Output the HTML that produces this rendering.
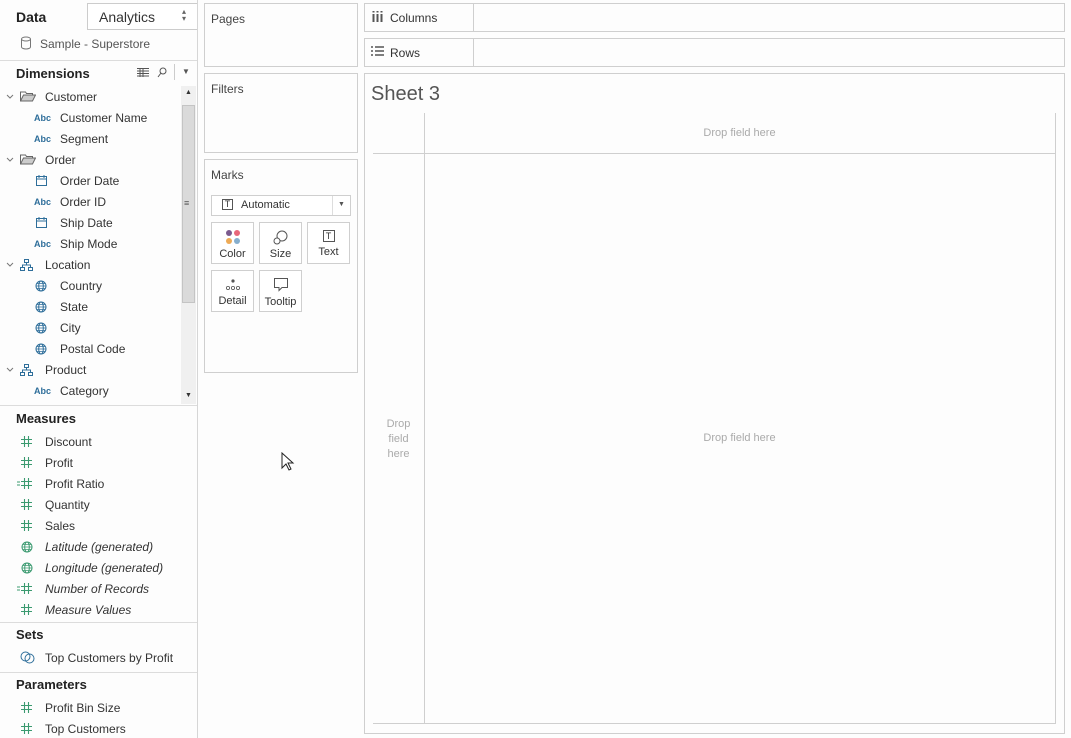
<!DOCTYPE html>
<html><head><meta charset="utf-8"><style>
*{margin:0;padding:0;box-sizing:border-box}
body{width:1071px;height:738px;background:#fdfdfd;font-family:"Liberation Sans",sans-serif;font-size:12px;color:#333;position:relative;overflow:hidden}
.a{position:absolute}
.box{position:absolute;border:1px solid #cfcfcf;background:#fdfdfd}
.t{position:absolute;white-space:nowrap}
.hd{font-weight:bold;font-size:13px;color:#222}
.abc{font-size:9px;font-weight:bold;color:#2e6e9a}
.it{font-style:italic}
.sep{position:absolute;left:0;width:197px;height:1px;background:#dcdcdc}
.dz{color:#aaa;font-size:11px;text-align:center}
.mb{position:absolute;width:43px;height:42px;border:1px solid #cfcfcf;background:#fff;text-align:center;font-size:11px}
.ic{position:absolute}
</style></head><body>
<!-- left panel -->
<div class="a" style="left:197px;top:0;width:1px;height:738px;background:#d6d6d6"></div>
<div class="a" style="left:87px;top:3px;width:110px;height:27px;border-left:1px solid #ccc;border-bottom:1px solid #ccc;border-top:1px solid #ccc;background:#fff"></div>
<div class="t hd" style="left:16px;top:9px;font-size:14px">Data</div>
<div class="t" style="left:99px;top:9px;font-size:14px;color:#333">Analytics</div>
<div class="t" style="left:182px;top:8px;font-size:8px;color:#666;line-height:7px">▴<br>▾</div>
<svg class="a" style="left:20px;top:36px" width="12" height="14"><ellipse cx="6" cy="3" rx="4.5" ry="2" fill="none" stroke="#777"/><path d="M1.5 3v8c0 1 2 2 4.5 2s4.5-1 4.5-2V3" fill="none" stroke="#777"/></svg>
<div class="t" style="left:40px;top:37px;color:#555">Sample - Superstore</div>
<div class="sep" style="top:60px"></div>
<div class="t hd" style="left:16px;top:66px">Dimensions</div>
<svg class="ic" style="left:137px;top:68px" width="12" height="9"><path d="M0 .5h12M0 3h12M0 5.5h12M0 8h12M3 0v9M6 0v9" stroke="#555" stroke-width="1"/></svg>
<svg class="ic" style="left:157px;top:67px" width="10" height="11"><circle cx="6" cy="4" r="3" fill="none" stroke="#555"/><path d="M4 6L1 10" stroke="#555"/></svg>
<div class="a" style="left:174px;top:64px;width:1px;height:16px;background:#ccc"></div>
<div class="t" style="left:182px;top:67px;font-size:8px;color:#555">▼</div>
<!-- scrollbar -->
<div class="a" style="left:181px;top:86px;width:15px;height:318px;background:#f0f0f0"></div>
<div class="a" style="left:182px;top:105px;width:13px;height:198px;background:#dadada;border:1px solid #c4c4c4"></div>
<div class="t" style="left:185px;top:89px;font-size:7px;color:#333">▲</div>
<div class="t" style="left:185px;top:392px;font-size:7px;color:#333">▼</div>
<div class="t" style="left:184px;top:198px;font-size:9px;color:#555">≡</div>
<div class="sep" style="top:405px"></div>
<!-- dims -->
<svg class="ic" style="left:6px;top:94px" width="8" height="6"><path d="M1 1l3 3 3-3" fill="none" stroke="#777"/></svg>
<svg class="ic" style="left:20px;top:91px" width="16" height="11"><path d="M.5 10V1h5l1 1.5h6V4" fill="none" stroke="#666"/><path d="M.5 10l3-6h12l-3 6z" fill="#ccc" stroke="#666"/></svg>
<div class="t" style="left:45px;top:90px">Customer</div>
<div class="t abc" style="left:34px;top:113px">Abc</div><div class="t" style="left:60px;top:111px">Customer Name</div>
<div class="t abc" style="left:34px;top:134px">Abc</div><div class="t" style="left:60px;top:132px">Segment</div>
<svg class="ic" style="left:6px;top:157px" width="8" height="6"><path d="M1 1l3 3 3-3" fill="none" stroke="#777"/></svg>
<svg class="ic" style="left:20px;top:154px" width="16" height="11"><path d="M.5 10V1h5l1 1.5h6V4" fill="none" stroke="#666"/><path d="M.5 10l3-6h12l-3 6z" fill="#ccc" stroke="#666"/></svg>
<div class="t" style="left:45px;top:153px">Order</div>
<svg class="ic" style="left:36px;top:175px" width="12" height="11"><rect x=".5" y="1.5" width="10" height="9" fill="none" stroke="#2e6e9a"/><path d="M.5 4h10M3 0v3M8 0v3" stroke="#2e6e9a"/></svg><div class="t" style="left:60px;top:174px">Order Date</div>
<div class="t abc" style="left:34px;top:197px">Abc</div><div class="t" style="left:60px;top:195px">Order ID</div>
<svg class="ic" style="left:36px;top:217px" width="12" height="11"><rect x=".5" y="1.5" width="10" height="9" fill="none" stroke="#2e6e9a"/><path d="M.5 4h10M3 0v3M8 0v3" stroke="#2e6e9a"/></svg><div class="t" style="left:60px;top:216px">Ship Date</div>
<div class="t abc" style="left:34px;top:239px">Abc</div><div class="t" style="left:60px;top:237px">Ship Mode</div>
<svg class="ic" style="left:6px;top:262px" width="8" height="6"><path d="M1 1l3 3 3-3" fill="none" stroke="#777"/></svg>
<svg class="ic" style="left:20px;top:259px" width="13" height="12"><rect x="4.5" y=".5" width="4" height="3" fill="none" stroke="#2e6e9a"/><rect x=".5" y="8.5" width="4" height="3" fill="none" stroke="#2e6e9a"/><rect x="8.5" y="8.5" width="4" height="3" fill="none" stroke="#2e6e9a"/><path d="M6.5 3.5v2.5M2.5 8.5V6h8v2.5" fill="none" stroke="#2e6e9a"/></svg>
<div class="t" style="left:45px;top:258px">Location</div>
<svg class="ic" style="left:35px;top:280px;" width="12" height="12" id="g"><circle cx="6" cy="6" r="5" fill="none" stroke="#2e6e9a"/><ellipse cx="6" cy="6" rx="2.3" ry="5" fill="none" stroke="#2e6e9a"/><path d="M1 6h10M2 3.5h8M2 8.5h8" stroke="#2e6e9a" stroke-width=".8"/></svg><div class="t" style="left:60px;top:279px">Country</div>
<svg class="ic" style="left:35px;top:301px" width="12" height="12"><circle cx="6" cy="6" r="5" fill="none" stroke="#2e6e9a"/><ellipse cx="6" cy="6" rx="2.3" ry="5" fill="none" stroke="#2e6e9a"/><path d="M1 6h10M2 3.5h8M2 8.5h8" stroke="#2e6e9a" stroke-width=".8"/></svg><div class="t" style="left:60px;top:300px">State</div>
<svg class="ic" style="left:35px;top:322px" width="12" height="12"><circle cx="6" cy="6" r="5" fill="none" stroke="#2e6e9a"/><ellipse cx="6" cy="6" rx="2.3" ry="5" fill="none" stroke="#2e6e9a"/><path d="M1 6h10M2 3.5h8M2 8.5h8" stroke="#2e6e9a" stroke-width=".8"/></svg><div class="t" style="left:60px;top:321px">City</div>
<svg class="ic" style="left:35px;top:343px" width="12" height="12"><circle cx="6" cy="6" r="5" fill="none" stroke="#2e6e9a"/><ellipse cx="6" cy="6" rx="2.3" ry="5" fill="none" stroke="#2e6e9a"/><path d="M1 6h10M2 3.5h8M2 8.5h8" stroke="#2e6e9a" stroke-width=".8"/></svg><div class="t" style="left:60px;top:342px">Postal Code</div>
<svg class="ic" style="left:6px;top:367px" width="8" height="6"><path d="M1 1l3 3 3-3" fill="none" stroke="#777"/></svg>
<svg class="ic" style="left:20px;top:364px" width="13" height="12"><rect x="4.5" y=".5" width="4" height="3" fill="none" stroke="#2e6e9a"/><rect x=".5" y="8.5" width="4" height="3" fill="none" stroke="#2e6e9a"/><rect x="8.5" y="8.5" width="4" height="3" fill="none" stroke="#2e6e9a"/><path d="M6.5 3.5v2.5M2.5 8.5V6h8v2.5" fill="none" stroke="#2e6e9a"/></svg>
<div class="t" style="left:45px;top:363px">Product</div>
<div class="t abc" style="left:34px;top:386px">Abc</div><div class="t" style="left:60px;top:384px">Category</div>
<!-- measures -->
<div class="t hd" style="left:16px;top:411px">Measures</div>
<svg width="0" height="0" style="position:absolute"><defs>
<g id="h"><path d="M3.5 0v11M7.5 0v11M0 3.5h11M0 7.5h11" stroke="#3b9a70" stroke-width="1.1"/></g>
<g id="eh"><path d="M0 4h3M0 7h3" stroke="#3b9a70"/><use href="#h" x="4"/></g>
<g id="gg"><circle cx="6" cy="6" r="5" fill="none" stroke="#3b9a70"/><ellipse cx="6" cy="6" rx="2.3" ry="5" fill="none" stroke="#3b9a70"/><path d="M1 6h10M2 3.5h8M2 8.5h8" stroke="#3b9a70" stroke-width=".8"/></g>
</defs></svg>
<svg class="ic" style="left:21px;top:436px" width="12" height="11"><use href="#h"/></svg><div class="t" style="left:45px;top:435px">Discount</div>
<svg class="ic" style="left:21px;top:457px" width="12" height="11"><use href="#h"/></svg><div class="t" style="left:45px;top:456px">Profit</div>
<svg class="ic" style="left:17px;top:478px" width="16" height="11"><use href="#eh"/></svg><div class="t" style="left:45px;top:477px">Profit Ratio</div>
<svg class="ic" style="left:21px;top:499px" width="12" height="11"><use href="#h"/></svg><div class="t" style="left:45px;top:498px">Quantity</div>
<svg class="ic" style="left:21px;top:520px" width="12" height="11"><use href="#h"/></svg><div class="t" style="left:45px;top:519px">Sales</div>
<svg class="ic" style="left:21px;top:541px" width="12" height="12"><use href="#gg"/></svg><div class="t it" style="left:45px;top:540px">Latitude (generated)</div>
<svg class="ic" style="left:21px;top:562px" width="12" height="12"><use href="#gg"/></svg><div class="t it" style="left:45px;top:561px">Longitude (generated)</div>
<svg class="ic" style="left:17px;top:583px" width="16" height="11"><use href="#eh"/></svg><div class="t it" style="left:45px;top:582px">Number of Records</div>
<svg class="ic" style="left:21px;top:604px" width="12" height="11"><use href="#h"/></svg><div class="t it" style="left:45px;top:603px">Measure Values</div>
<div class="sep" style="top:622px"></div>
<div class="t hd" style="left:16px;top:627px">Sets</div>
<svg class="ic" style="left:20px;top:651px" width="16" height="13"><circle cx="5.5" cy="5.5" r="4.5" fill="none" stroke="#2e6e9a"/><circle cx="9.5" cy="7.5" r="4.5" fill="none" stroke="#2e6e9a"/></svg><div class="t" style="left:45px;top:651px">Top Customers by Profit</div>
<div class="sep" style="top:672px"></div>
<div class="t hd" style="left:16px;top:677px">Parameters</div>
<svg class="ic" style="left:21px;top:702px" width="12" height="11"><use href="#h"/></svg><div class="t" style="left:45px;top:701px">Profit Bin Size</div>
<svg class="ic" style="left:21px;top:723px" width="12" height="11"><use href="#h"/></svg><div class="t" style="left:45px;top:722px">Top Customers</div>
<!-- middle -->
<div class="box" style="left:204px;top:3px;width:154px;height:64px"></div>
<div class="t" style="left:211px;top:12px;color:#444">Pages</div>
<div class="box" style="left:204px;top:73px;width:154px;height:80px"></div>
<div class="t" style="left:211px;top:82px;color:#444">Filters</div>
<div class="box" style="left:204px;top:159px;width:154px;height:214px"></div>
<div class="t" style="left:211px;top:168px;color:#444">Marks</div>
<div class="a" style="left:211px;top:195px;width:140px;height:21px;border:1px solid #cfcfcf;background:#fff"></div>
<div class="a" style="left:332px;top:196px;width:1px;height:19px;background:#ddd"></div>
<div class="t" style="left:222px;top:199px;font-size:9px;border:1px solid #555;width:11px;height:11px;line-height:9px;text-align:center">T</div>
<div class="t" style="left:241px;top:199px;font-size:11px">Automatic</div>
<div class="t" style="left:338px;top:201px;font-size:7px;color:#555">▼</div>
<div class="mb" style="left:211px;top:222px"><svg style="margin-top:6px" width="16" height="16"><circle cx="4" cy="4" r="3" fill="#7b5a8e"/><circle cx="12" cy="4" r="3" fill="#e8677a"/><circle cx="4" cy="12" r="3" fill="#eeaa55"/><circle cx="12" cy="12" r="3" fill="#86aecd"/></svg><div>Color</div></div>
<div class="mb" style="left:259px;top:222px"><svg style="margin-top:6px" width="16" height="16"><circle cx="9" cy="7" r="5" fill="none" stroke="#555"/><circle cx="4" cy="12" r="3" fill="#fff" stroke="#555"/></svg><div>Size</div></div>
<div class="mb" style="left:307px;top:222px"><div style="margin:7px auto 0;font-size:9px;border:1px solid #555;width:12px;height:12px;line-height:10px">T</div><div style="margin-top:4px">Text</div></div>
<div class="mb" style="left:211px;top:270px"><svg style="margin-top:7px" width="16" height="14"><circle cx="8" cy="3" r="1.6" fill="#555"/><circle cx="3" cy="10" r="1.6" fill="none" stroke="#555" stroke-width=".8"/><circle cx="8" cy="10" r="1.6" fill="none" stroke="#555" stroke-width=".8"/><circle cx="13" cy="10" r="1.6" fill="none" stroke="#555" stroke-width=".8"/></svg><div>Detail</div></div>
<div class="mb" style="left:259px;top:270px"><svg style="margin-top:6px" width="16" height="16"><path d="M1.5 1.5h13v9H9l-3 3v-3H1.5z" fill="none" stroke="#555"/></svg><div>Tooltip</div></div>
<svg class="a" style="left:281px;top:452px" width="14" height="20"><path d="M1 1v15l4-4 3 6 2-1-3-6h5z" fill="#fff" stroke="#222"/></svg>
<!-- right -->
<div class="box" style="left:364px;top:3px;width:701px;height:29px"></div>
<div class="a" style="left:473px;top:4px;width:1px;height:27px;background:#cfcfcf"></div>
<svg class="ic" style="left:372px;top:11px" width="12" height="11"><path d="M1.5 3v8M5.5 3v8M9.5 3v8" stroke="#555" stroke-width="2"/><path d="M1.5 0v1.5M5.5 0v1.5M9.5 0v1.5" stroke="#555" stroke-width="2"/></svg>
<div class="t" style="left:390px;top:11px">Columns</div>
<div class="box" style="left:364px;top:38px;width:701px;height:29px"></div>
<div class="a" style="left:473px;top:39px;width:1px;height:27px;background:#cfcfcf"></div>
<svg class="ic" style="left:371px;top:46px" width="13" height="10"><path d="M0 1h2M0 5h2M0 9h2M4 1h9M4 5h9M4 9h9" stroke="#555" stroke-width="1.6"/></svg>
<div class="t" style="left:390px;top:46px">Rows</div>
<div class="box" style="left:364px;top:73px;width:701px;height:661px"></div>
<div class="t" style="left:371px;top:83px;font-size:20px;color:#555">Sheet 3</div>
<div class="a" style="left:424px;top:113px;width:1px;height:611px;background:#cfcfcf"></div>
<div class="a" style="left:373px;top:153px;width:683px;height:1px;background:#cfcfcf"></div>
<div class="a" style="left:1055px;top:113px;width:1px;height:611px;background:#cfcfcf"></div>
<div class="a" style="left:373px;top:723px;width:683px;height:1px;background:#cfcfcf"></div>
<div class="t dz" style="left:424px;top:127px;width:631px">Drop field here</div>
<div class="t dz" style="left:424px;top:432px;width:631px">Drop field here</div>
<div class="t dz" style="left:373px;top:417px;width:51px;line-height:15px;white-space:normal">Drop<br>field<br>here</div>
</body></html>
